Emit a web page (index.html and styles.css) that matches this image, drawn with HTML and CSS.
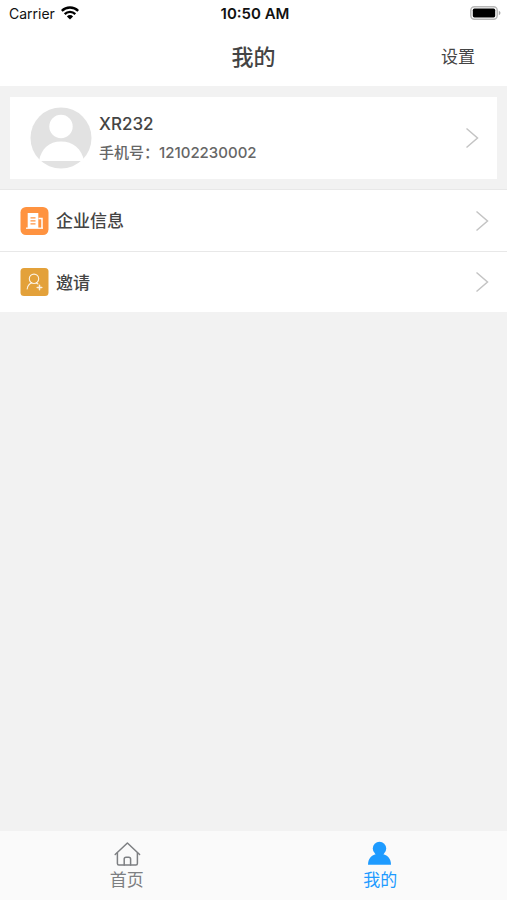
FILE: index.html
```html
<!DOCTYPE html>
<html lang="zh-CN">
<head>
<meta charset="utf-8">
<meta name="viewport" content="width=device-width, initial-scale=1">
<title>我的</title>
<link rel="stylesheet" href="styles.css">
</head>
<body>
<div class="status">
  <div class="carrier">
    <span>Carrier</span>
    <svg width="18" height="14" viewBox="0 0 18 14" aria-hidden="true"><g fill="none" stroke="#000" stroke-width="2.3"><path d="M.8 4.9a11.6 11.6 0 0 1 16.4 0"/><path d="M3.7 8.1a7.5 7.5 0 0 1 10.6 0"/></g><path d="M5.9 10.4a4.4 4.4 0 0 1 6.2 0L9 13.6z"/></svg>
  </div>
  <time class="clock">10:50 AM</time>
  <svg class="battery" width="31" height="14" viewBox="0 0 31 14" aria-hidden="true"><rect x=".8" y=".8" width="26.4" height="12.4" rx="3.6" fill="#fff" stroke="#b8b8b8" stroke-width="1.5"/><rect x="2.800" y="2.600" width="22.400" height="8.800" rx="1.600"/><path d="M28.800 4.800c2.200.8 2.200 3.600 0 4.400z" fill="#a8a8a8"/></svg>
</div>
<header class="header">
  <h1 class="title">我的</h1>
  <a class="settings" href="#settings">设置</a>
</header>
<main class="main">
  <a class="profile" href="#profile">
    <svg class="avatar" width="62" height="62" viewBox="0 0 62 62" aria-hidden="true"><circle cx="31" cy="31" r="30.5" fill="#e2e2e2"/><circle cx="31" cy="19.5" r="11.7" fill="#fff"/><path d="M9 54C11 42 19 34.500 31 34.500S52 42 54 54z" fill="#fff"/></svg>
    <span class="details">
      <span class="name">XR232</span>
      <span class="phone">手机号：12102230002</span>
    </span>
    <svg class="chevron" width="14" height="22" viewBox="0 0 14 22" aria-hidden="true"><path d="M1.500 1.500 12.500 11 1.500 20.500"/></svg>
  </a>
  <nav class="list">
    <a class="row" href="#company">
      <svg width="29" height="28" viewBox="0 0 29 28" aria-hidden="true"><rect x=".5" width="28" height="28" rx="5.500" fill="#ff9340"/><path d="M7.700 6h10.600v15H7.700z" fill="#fff"/><path d="M6 21.200h17" stroke="#fff" stroke-width="1.300"/><path d="M18.500 11.500H22V21" fill="none" stroke="#fff" stroke-width="1.500"/><path d="M10.500 10.800h5M10.500 13.800h5M10.500 16.800h5" stroke="#ff9340" stroke-width="1.300"/></svg>
      <span class="label">企业信息</span>
      <svg class="chevron" width="14" height="22" viewBox="0 0 14 22" aria-hidden="true"><path d="M1.500 1.500 12.500 11 1.500 20.500"/></svg>
    </a>
    <a class="row" href="#invite">
      <svg width="29" height="28" viewBox="0 0 29 28" aria-hidden="true"><rect x=".5" width="28" height="28" rx="3.500" fill="#e3a13a"/><g fill="none" stroke="#fff" stroke-opacity=".85" stroke-width="1.100" stroke-linecap="round"><circle cx="14" cy="10.800" r="4.700"/><path d="M7.200 21c.4-3.400 2-5.200 4.600-6.200M16.200 14.800l1.800 1.200"/><path d="M19.500 17.200v4.600M17.200 19.500h4.600" stroke-width="1.500"/></g></svg>
      <span class="label">邀请</span>
      <svg class="chevron" width="14" height="22" viewBox="0 0 14 22" aria-hidden="true"><path d="M1.500 1.500 12.500 11 1.500 20.500"/></svg>
    </a>
  </nav>
</main>
<nav class="tabs">
  <a class="tab" href="#home">
    <svg width="28" height="26" viewBox="0 0 28 26" aria-hidden="true"><g fill="none" stroke="#7d7f82" stroke-width="1.500" stroke-linejoin="round" stroke-linecap="round"><path d="M2.200 13.500 14.400 2l12.200 11.500"/><path d="M4.400 12v10.500q0 1.500 1.500 1.500h17q1.500 0 1.500-1.500V12"/><path d="M11.200 24v-6q0-1.800 1.800-1.800h2.800q1.800 0 1.800 1.800v6"/></g></svg>
    <span>首页</span>
  </a>
  <a class="tab active" href="#mine" aria-current="page">
    <svg width="28" height="26" viewBox="0 0 28 26" aria-hidden="true"><g fill="#1e9bff"><circle cx="13.500" cy="7.500" r="6.700"/><path d="M2 23.800c0-6 3-9.300 8-10.800h7c5 1.500 8 4.800 8 10.800z"/></g></svg>
    <span>我的</span>
  </a>
</nav>
</body>
</html>
```
FILE: styles.css
```css
* {
  box-sizing: border-box;
}

body {
  margin: 0;
  min-height: 100vh;
  display: flex;
  flex-direction: column;
  background: #f2f2f2;
  color: #444;
  font-family: Inter, "Noto Sans CJK SC", sans-serif;
}

a {
  color: inherit;
  text-decoration: none;
}

svg {
  display: block;
  flex: none;
}

.status,
.header {
  display: grid;
  grid-template-columns: 1fr auto 1fr;
  align-items: center;
  background: #fff;
}

.status {
  height: 26px;
  padding: 0 6px 0 9px;
  color: #111;
  font-size: 14px;
}

.carrier {
  display: flex;
  align-items: center;
  gap: 6px;
}

.clock {
  font-size: 15px;
  font-weight: 600;
}

.battery {
  justify-self: end;
}

.header {
  height: 60px;
  padding: 0 32px 2px;
}

.title {
  grid-column: 2;
  margin: 0;
  font-size: 22px;
  font-weight: 500;
}

.settings {
  justify-self: end;
  font-size: 17px;
}

.main {
  flex: 1;
}

.profile {
  display: flex;
  align-items: center;
  gap: 7px;
  margin: 11px 10px 10px;
  padding: 10px 18px 10px 20px;
  background: #fff;
}

.details {
  flex: 1;
  display: flex;
  flex-direction: column;
  gap: 5px;
  font-weight: 500;
}

.name {
  font-size: 17px;
  line-height: 24px;
}

.phone {
  color: #666;
  font-size: 15px;
  line-height: 24px;
}

.chevron {
  fill: none;
  stroke: #c4c4c4;
  stroke-width: 1.5;
}

.list {
  border-top: 1px solid #e8e8e8;
  background: #fff;
}

.row {
  display: flex;
  align-items: center;
  gap: 7px;
  height: 61px;
  padding: 0 18px 0 20px;
}

.row + .row {
  border-top: 1px solid #e8e8e8;
}

.label {
  flex: 1;
  padding-bottom: 2px;
  font-size: 17px;
  font-weight: 500;
}

.tabs {
  display: flex;
  height: 69px;
  background: #fafafa;
}

.tab {
  flex: 1;
  display: flex;
  flex-direction: column;
  align-items: center;
  padding-top: 10px;
  color: #7d7f82;
  font-size: 17px;
  line-height: 26px;
}

.active {
  color: #1e9bff;
}
```
